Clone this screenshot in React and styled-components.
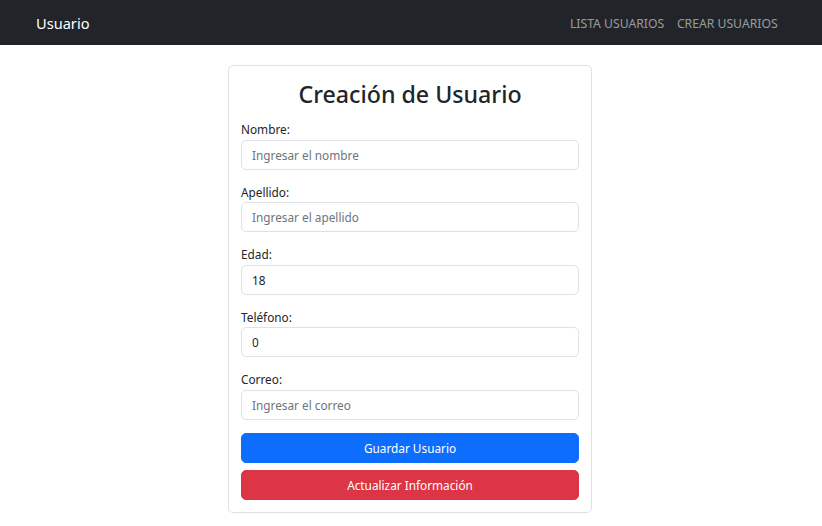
import React from "react";
import styled, { createGlobalStyle } from "styled-components";

const Global = createGlobalStyle`
  * { box-sizing: border-box; }
  body {
    margin: 0;
    background: #ffffff;
    font-family: "Noto Sans", "Open Sans", sans-serif;
    font-size: 11.8px;
    line-height: 1.5;
    color: #212529;
  }
`;

const Navbar = styled.nav`
  height: 45px;
  background: #212529;
  display: flex;
  align-items: center;
  justify-content: space-between;
  padding: 3px 38px 0 36px;
`;

const Brand = styled.a`
  color: #ffffff;
  font-size: 14.6px;
  text-decoration: none;
`;

const NavLinks = styled.div`
  display: flex;
`;

const NavLink = styled.a`
  color: rgba(255, 255, 255, 0.55);
  font-size: 12.2px;
  padding: 0 6.4px;
  text-decoration: none;
`;

const Main = styled.main`
  display: flex;
  justify-content: center;
  padding: 20px 2px 0 0;
`;

const Card = styled.form`
  width: 364px;
  border: 1px solid #dee2e6;
  border-radius: 5px;
  padding: 12px 12px 12px;
  display: flex;
  flex-direction: column;
`;

const Title = styled.h2`
  margin: 0 0 10px;
  text-align: center;
  font-size: 23.2px;
  font-weight: 500;
  line-height: 32px;
`;

const Group = styled.div`
  display: flex;
  flex-direction: column;
  margin-bottom: 13px;
`;

const Label = styled.label`
  line-height: 19.5px;
`;

const Input = styled.input`
  height: 30px;
  border: 1px solid #dee2e6;
  border-radius: 5px;
  padding: 0 10px;
  font-family: inherit;
  font-size: 11.8px;
  color: #212529;
  outline: none;
  &::placeholder { color: #6c757d; }
`;

const Button = styled.button`
  height: 30px;
  width: 100%;
  border: 1px solid ${(p) => p.$bg};
  background: ${(p) => p.$bg};
  color: #ffffff;
  border-radius: 5px;
  font-family: inherit;
  font-size: 11.8px;
  margin-bottom: ${(p) => p.$mb || 0}px;
  cursor: pointer;
`;

const fields = [
  { label: "Nombre:", placeholder: "Ingresar el nombre" },
  { label: "Apellido:", placeholder: "Ingresar el apellido" },
  { label: "Edad:", value: "18" },
  { label: "Teléfono:", value: "0" },
  { label: "Correo:", placeholder: "Ingresar el correo" },
];

export default function App() {
  return (
    <>
      <Global />
      <Navbar>
        <Brand href="#">Usuario</Brand>
        <NavLinks>
          <NavLink href="#">LISTA USUARIOS</NavLink>
          <NavLink href="#">CREAR USUARIOS</NavLink>
        </NavLinks>
      </Navbar>
      <Main>
        <Card onSubmit={(e) => e.preventDefault()}>
          <Title>Creación de Usuario</Title>
          {fields.map((f) => (
            <Group key={f.label}>
              <Label>{f.label}</Label>
              <Input placeholder={f.placeholder} defaultValue={f.value} />
            </Group>
          ))}
          <Button type="button" $bg="#0d6efd" $mb={7}>Guardar Usuario</Button>
          <Button type="button" $bg="#dc3545">Actualizar Información</Button>
        </Card>
      </Main>
    </>
  );
}
